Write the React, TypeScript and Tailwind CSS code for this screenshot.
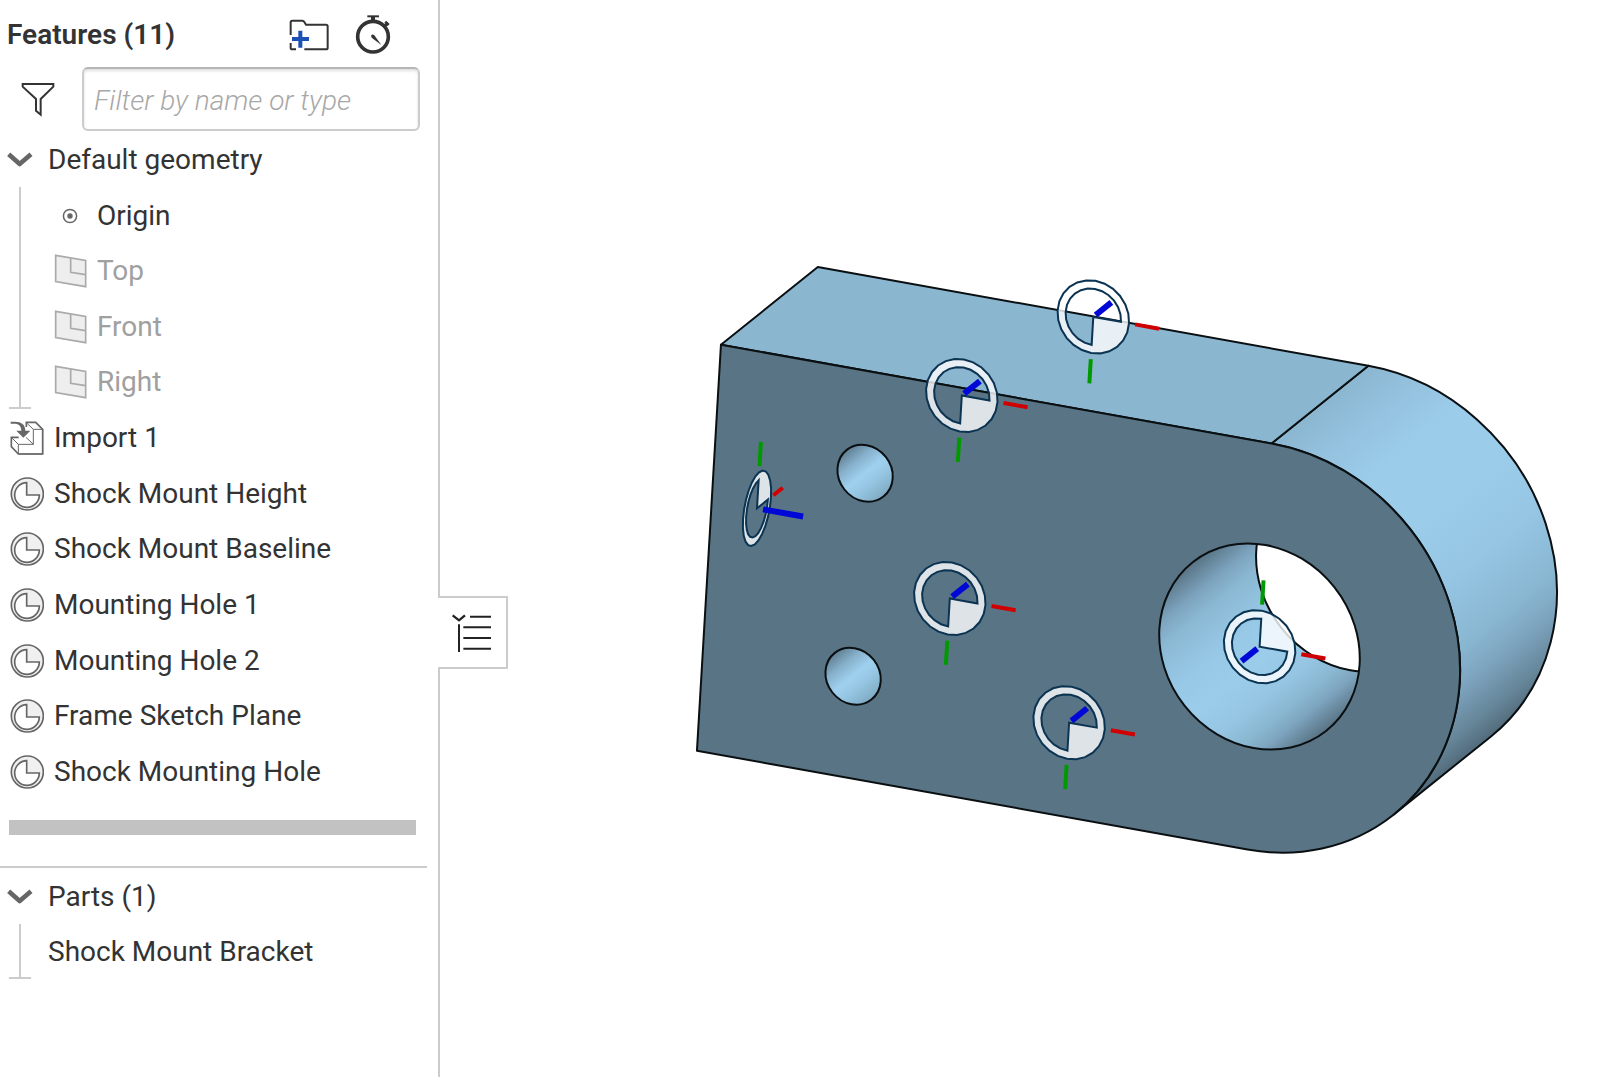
import { useState } from 'react';

type Vec = [number, number];

// projected axes of the bracket, in viewport pixels for one outer radius
const U: Vec = [200.6, 35.9];
const V: Vec = [-12, 202.5];
const W: Vec = [78.6, -62.8];

const neg = (a: Vec): Vec => [-a[0], -a[1]];

const connectors: { name: string; at: Vec; x: Vec; y: Vec; z: Vec }[] = [
  { name: 'Shock Mount Height', at: [1093.3, 316.9], x: U, y: V, z: W },
  { name: 'Shock Mount Baseline', at: [961.8, 395.5], x: U, y: V, z: W },
  { name: 'Mounting Hole 1', at: [949.8, 598.5], x: U, y: V, z: W },
  { name: 'Mounting Hole 2', at: [1069.1, 722.7], x: U, y: V, z: W },
  { name: 'Frame Sketch Plane', at: [757, 508.3], x: W, y: neg(V), z: U },
  { name: 'Shock Mounting Hole', at: [1259.6, 646.7], x: U, y: neg(V), z: neg(W) },
];

const planes = ['Top', 'Front', 'Right'];

const features = [
  'Shock Mount Height',
  'Shock Mount Baseline',
  'Mounting Hole 1',
  'Mounting Hole 2',
  'Frame Sketch Plane',
  'Shock Mounting Hole',
];

function FolderPlusIcon() {
  return (
    <svg className="h-[34px] w-[42px]" viewBox="864 54 126 102" fill="none" aria-hidden="true">
      <path d="M872 105V67q0-5 5-5h30q4 0 6 4l5 8h60q5 0 5 5v64q0 5-5 5h-65M872 129v14q0 5 5 5h11" stroke="#333" strokeWidth="6" />
      <path d="M901 92v51M876 117h51" stroke="#1b50b5" strokeWidth="12" />
    </svg>
  );
}

function StopwatchIcon() {
  return (
    <svg className="h-[41px] w-[38px]" viewBox="1062 42 114 123" fill="none" aria-hidden="true">
      <circle cx="1119" cy="110" r="46" stroke="#333" strokeWidth="11" />
      <path d="M1102 49h35" stroke="#333" strokeWidth="6" />
      <path d="M1119 50v12" stroke="#333" strokeWidth="12" />
      <path d="M1150 82l12-12" stroke="#333" strokeWidth="10" />
      <path d="M1156 65l10 10" stroke="#333" strokeWidth="8" />
      <path d="M1114 105q4-3 9 1l21 29-28-21q-4-5-2-9z" fill="#333" />
    </svg>
  );
}

function FunnelIcon() {
  return (
    <svg className="h-9 w-9" viewBox="60 245 108 108" fill="none" aria-hidden="true">
      <path d="M68 254h92v8l-38 37v47l-14-12v-35L68 262z" stroke="#333" strokeWidth="6" />
    </svg>
  );
}

function ChevronIcon() {
  return (
    <svg className="h-[18px] w-7" viewBox="18 450 84 54" fill="none" aria-hidden="true">
      <path d="M26 460l33 29 34-29" stroke="#666" strokeWidth="14" strokeLinejoin="round" />
    </svg>
  );
}

function OriginIcon() {
  return (
    <svg className="h-4 w-4" viewBox="0 0 16 16" fill="none" aria-hidden="true">
      <circle cx="8" cy="8" r="6.6" stroke="#666" strokeWidth="1.5" />
      <circle cx="8" cy="8" r="2.7" fill="#666" />
    </svg>
  );
}

function PlaneIcon() {
  return (
    <svg className="h-9 w-[33px]" viewBox="163 40 99 108" fill="none" aria-hidden="true">
      <path d="M168 47l90 15v79l-90-15z" fill="#eee" stroke="#aaa" strokeWidth="5" />
      <path d="M213 55v43l45 7" stroke="#aaa" strokeWidth="5" />
    </svg>
  );
}

function ImportIcon() {
  return (
    <svg className="h-[34px] w-[34px]" viewBox="31 544 102 102" fill="none" aria-hidden="true">
      <path d="M78 570v-22h30l21 21v74H56l-21-22v-28h43z" fill="#fff" />
      <path d="M101 569h28v74H56v-29h45z" fill="#fff" stroke="#666" strokeWidth="3" />
      <path d="M80 562v-14h28l21 21v74H56l-21-22v-28h22" stroke="#666" strokeWidth="5" />
      <path d="M80 549l21 20M36 594l20 20M79 593l22 21" stroke="#666" strokeWidth="3" />
      <path d="M33 546h12c20 0 32 8 32 27h15l-21 21-21-21h15c0-14-8-21-20-21H33z" fill="#666" />
    </svg>
  );
}

function MateIcon() {
  return (
    <svg className="h-[34px] w-[34px]" viewBox="31 711 102 102" fill="none" aria-hidden="true">
      <circle cx="83" cy="762" r="48" fill="#f0f0f0" stroke="#666" strokeWidth="5" />
      <path d="M81 728v37h38a37 37 0 1 1-38-37z" fill="#fff" stroke="#666" strokeWidth="5" />
    </svg>
  );
}

function ListToggleIcon() {
  return (
    <svg className="h-[42px] w-[42px]" viewBox="1350 275 126 126" fill="none" stroke="#222" aria-hidden="true">
      <path d="M1410 289h63M1390 321h83M1390 353h83M1390 385h83M1377 312v83" strokeWidth="6" />
      <path d="M1358 285l19 15 18-15" strokeWidth="7" />
    </svg>
  );
}

function Connector({ at, x, y, z }: { at: Vec; x: Vec; y: Vec; z: Vec }) {
  const pt = (a: number, b: number) => `${at[0] + a * x[0] + b * y[0]},${at[1] + a * x[1] + b * y[1]}`;
  const arc = (r: number, from: number, to: number, steps: number) =>
    Array.from({ length: steps + 1 }, (_, i) => {
      const t = ((from + ((to - from) * i) / steps) * Math.PI) / 180;
      return pt(r * Math.cos(t), r * Math.sin(t));
    });
  const outer = 'M' + arc(0.178, 0, 360, 24).join('L') + 'Z';
  const inner = 'M' + [pt(0, 0), ...arc(0.138, 90, 360, 18)].join('L') + 'Z';
  return (
    <g>
      <path d={outer + inner} fill="#fff" fillOpacity="0.8" fillRule="evenodd" stroke="#0b3352" strokeWidth="2" />
      <path d={`M${pt(0.208, 0)}L${pt(0.328, 0)}`} stroke="#d00000" strokeWidth="4" />
      <path d={`M${pt(0, 0.208)}L${pt(0, 0.328)}`} stroke="#009a00" strokeWidth="4" />
      <path
        d={`M${at[0] + z[0] * 0.03},${at[1] + z[1] * 0.03}L${at[0] + z[0] * 0.23},${at[1] + z[1] * 0.23}`}
        stroke="#0008d8"
        strokeWidth="6"
      />
    </g>
  );
}

function Bracket() {
  return (
    <svg className="block h-full w-full" viewBox="440 0 1160 1077" fill="none" role="img" aria-label="Shock Mount Bracket">
      <defs>
        <linearGradient id="round" gradientUnits="userSpaceOnUse" x1="-0.5" y1="-0.491" x2="0.713" y2="0.701">
          <stop offset="0" stopColor="#8bb6d0" />
          <stop offset="0.1" stopColor="#93c0dd" />
          <stop offset="0.25" stopColor="#9bcdeb" />
          <stop offset="0.42" stopColor="#9bcdeb" />
          <stop offset="0.6" stopColor="#95c5e3" />
          <stop offset="0.75" stopColor="#8ab8d3" />
          <stop offset="0.84" stopColor="#7ea5c0" />
          <stop offset="0.94" stopColor="#668699" />
          <stop offset="1" stopColor="#526b7b" />
        </linearGradient>
        <linearGradient id="bore" gradientUnits="userSpaceOnUse" x1="-0.357" y1="-0.35" x2="0.357" y2="0.35">
          <stop offset="0" stopColor="#587383" />
          <stop offset="0.06" stopColor="#6a8ba1" />
          <stop offset="0.13" stopColor="#7ea5c0" />
          <stop offset="0.22" stopColor="#8bb9d4" />
          <stop offset="0.4" stopColor="#97c8e6" />
          <stop offset="0.55" stopColor="#9bcdeb" />
          <stop offset="0.7" stopColor="#95c5e3" />
          <stop offset="0.8" stopColor="#8ab8d2" />
          <stop offset="0.88" stopColor="#7ea5c0" />
          <stop offset="1" stopColor="#587383" />
        </linearGradient>
        <linearGradient id="drill" gradientUnits="userSpaceOnUse" x1="-0.1" y1="-0.098" x2="0.1" y2="0.098">
          <stop offset="0" stopColor="#5f7d90" />
          <stop offset="0.25" stopColor="#86b0cb" />
          <stop offset="0.5" stopColor="#9fd1ef" />
          <stop offset="0.68" stopColor="#96c6e3" />
          <stop offset="0.85" stopColor="#8ab8d2" />
          <stop offset="1" stopColor="#7fa7c0" />
        </linearGradient>
        <clipPath id="opening">
          <circle r="0.5" />
        </clipPath>
      </defs>
      {/* one unit = the outer radius, centred on the big hole */}
      <g transform="matrix(200.2 35.9 -12 203 1259.5 646.5)" stroke="#0a0f12" strokeLinejoin="round">
        <path
          d="M0-1L.456-1.4635A1 1 0 0 1 1.169.2375L.713.701A1 1 0 0 0 0-1Z"
          fill="url(#round)"
          strokeWidth="2"
          vectorEffect="non-scaling-stroke"
        />
        <path
          d="M-2.75-1L-2.294-1.4635H.456L0-1Z"
          fill="#8bb6d0"
          strokeWidth="2"
          vectorEffect="non-scaling-stroke"
        />
        <path
          d="M-2.75-1H0A1 1 0 0 1 0 1H-2.75Z"
          fill="#597585"
          strokeWidth="2"
          vectorEffect="non-scaling-stroke"
        />
        <circle r="0.5" fill="url(#bore)" stroke="none" />
        <g clipPath="url(#opening)">
          <circle cx="0.456" cy="-0.4635" r="0.5" fill="#fff" strokeWidth="2" vectorEffect="non-scaling-stroke" />
        </g>
        <circle r="0.5" strokeWidth="2" vectorEffect="non-scaling-stroke" />
        <g transform="translate(-2 -.5)">
          <circle r="0.138" fill="url(#drill)" strokeWidth="2" vectorEffect="non-scaling-stroke" />
        </g>
        <g transform="translate(-2 .5)">
          <circle r="0.138" fill="url(#drill)" strokeWidth="2" vectorEffect="non-scaling-stroke" />
        </g>
      </g>
      {connectors.map((c) => (
        <Connector key={c.name} at={c.at} x={c.x} y={c.y} z={c.z} />
      ))}
    </svg>
  );
}

function App() {
  const [filter, setFilter] = useState('');
  const [open, setOpen] = useState(true);

  return (
    <div className="flex min-h-screen bg-white font-[Roboto,sans-serif] text-[28px] leading-8 text-[#333]">
      {open && (
        <aside className="w-[440px] shrink-0 border-r-2 border-[#ccc]">
          <header className="flex h-[67px] items-center pl-[7px] pt-[2px]">
            <h1 className="flex-1 font-semibold">Features (11)</h1>
            <div className="flex items-center gap-6 pr-[46px]">
              <button type="button" aria-label="Add folder">
                <FolderPlusIcon />
              </button>
              <button type="button" aria-label="Regeneration times">
                <StopwatchIcon />
              </button>
            </div>
          </header>

          <div className="flex h-16 items-center gap-[26px] pl-5 pr-[18px]">
            <button type="button" aria-label="Filter">
              <FunnelIcon />
            </button>
            <input
              type="text"
              aria-label="Filter by name or type"
              placeholder="Filter by name or type"
              value={filter}
              onChange={(e) => setFilter(e.target.value)}
              className="h-16 min-w-0 flex-1 rounded-md border-2 border-[#ccc] border-t-[#b5b5b5] px-[10px] pt-[2px] shadow-[inset_0_2px_3px_rgba(0,0,0,0.12)] outline-none placeholder:font-light placeholder:italic placeholder:text-[#a8a8a8]"
            />
          </div>

          <section>
            <button type="button" className="flex h-14 w-full items-center gap-[14px] pl-[6px] pt-[2px] text-left">
              <ChevronIcon />
              Default geometry
            </button>
            <ul className="relative ml-[19px] grid h-[222px] auto-rows-fr border-l-2 border-[#ccc]">
              <li className="flex items-center gap-[19px] pl-[41px] pt-[2px]">
                <OriginIcon />
                Origin
              </li>
              {planes.map((p) => (
                <li key={p} className="flex items-center gap-[10px] pl-[33px] pt-[2px] text-[#a0a0a0]">
                  <PlaneIcon />
                  {p}
                </li>
              ))}
              <li aria-hidden="true" className="absolute -left-3 bottom-0 h-[2px] w-[22px] bg-[#ccc]" />
            </ul>
            <ul className="grid h-[390px] auto-rows-fr">
              <li className="flex items-center gap-[10px] pl-[10px] pt-[2px]">
                <ImportIcon />
                Import 1
              </li>
              {features.map((f) => (
                <li key={f} className="flex items-center gap-[10px] pl-[10px] pt-[2px]">
                  <MateIcon />
                  {f}
                </li>
              ))}
            </ul>
          </section>

          <div className="ml-[9px] mr-[22px] mt-[21px] h-[15px] bg-[#c2c2c2]" />

          <section className="mt-[31px]">
            <div className="mr-[11px] h-[2px] bg-[#ccc]" />
            <button type="button" className="flex h-14 w-full items-center gap-[14px] pl-[6px] pt-[2px] text-left">
              <ChevronIcon />
              Parts (1)
            </button>
            <ul className="relative ml-[19px] border-l-2 border-[#ccc]">
              <li className="flex h-[55px] items-center pl-[27px]">Shock Mount Bracket</li>
              <li aria-hidden="true" className="absolute -left-3 bottom-0 h-[2px] w-[22px] bg-[#ccc]" />
            </ul>
          </section>
        </aside>
      )}

      <main className="relative min-w-0 flex-1">
        <Bracket />
        <button
          type="button"
          aria-label="Toggle feature list"
          onClick={() => setOpen(!open)}
          className="absolute -left-[2px] top-[596px] flex h-[73px] w-[70px] items-center border-2 border-l-0 border-[#ccc] bg-white pl-3"
        >
          <ListToggleIcon />
        </button>
      </main>
    </div>
  );
}

export default App;
